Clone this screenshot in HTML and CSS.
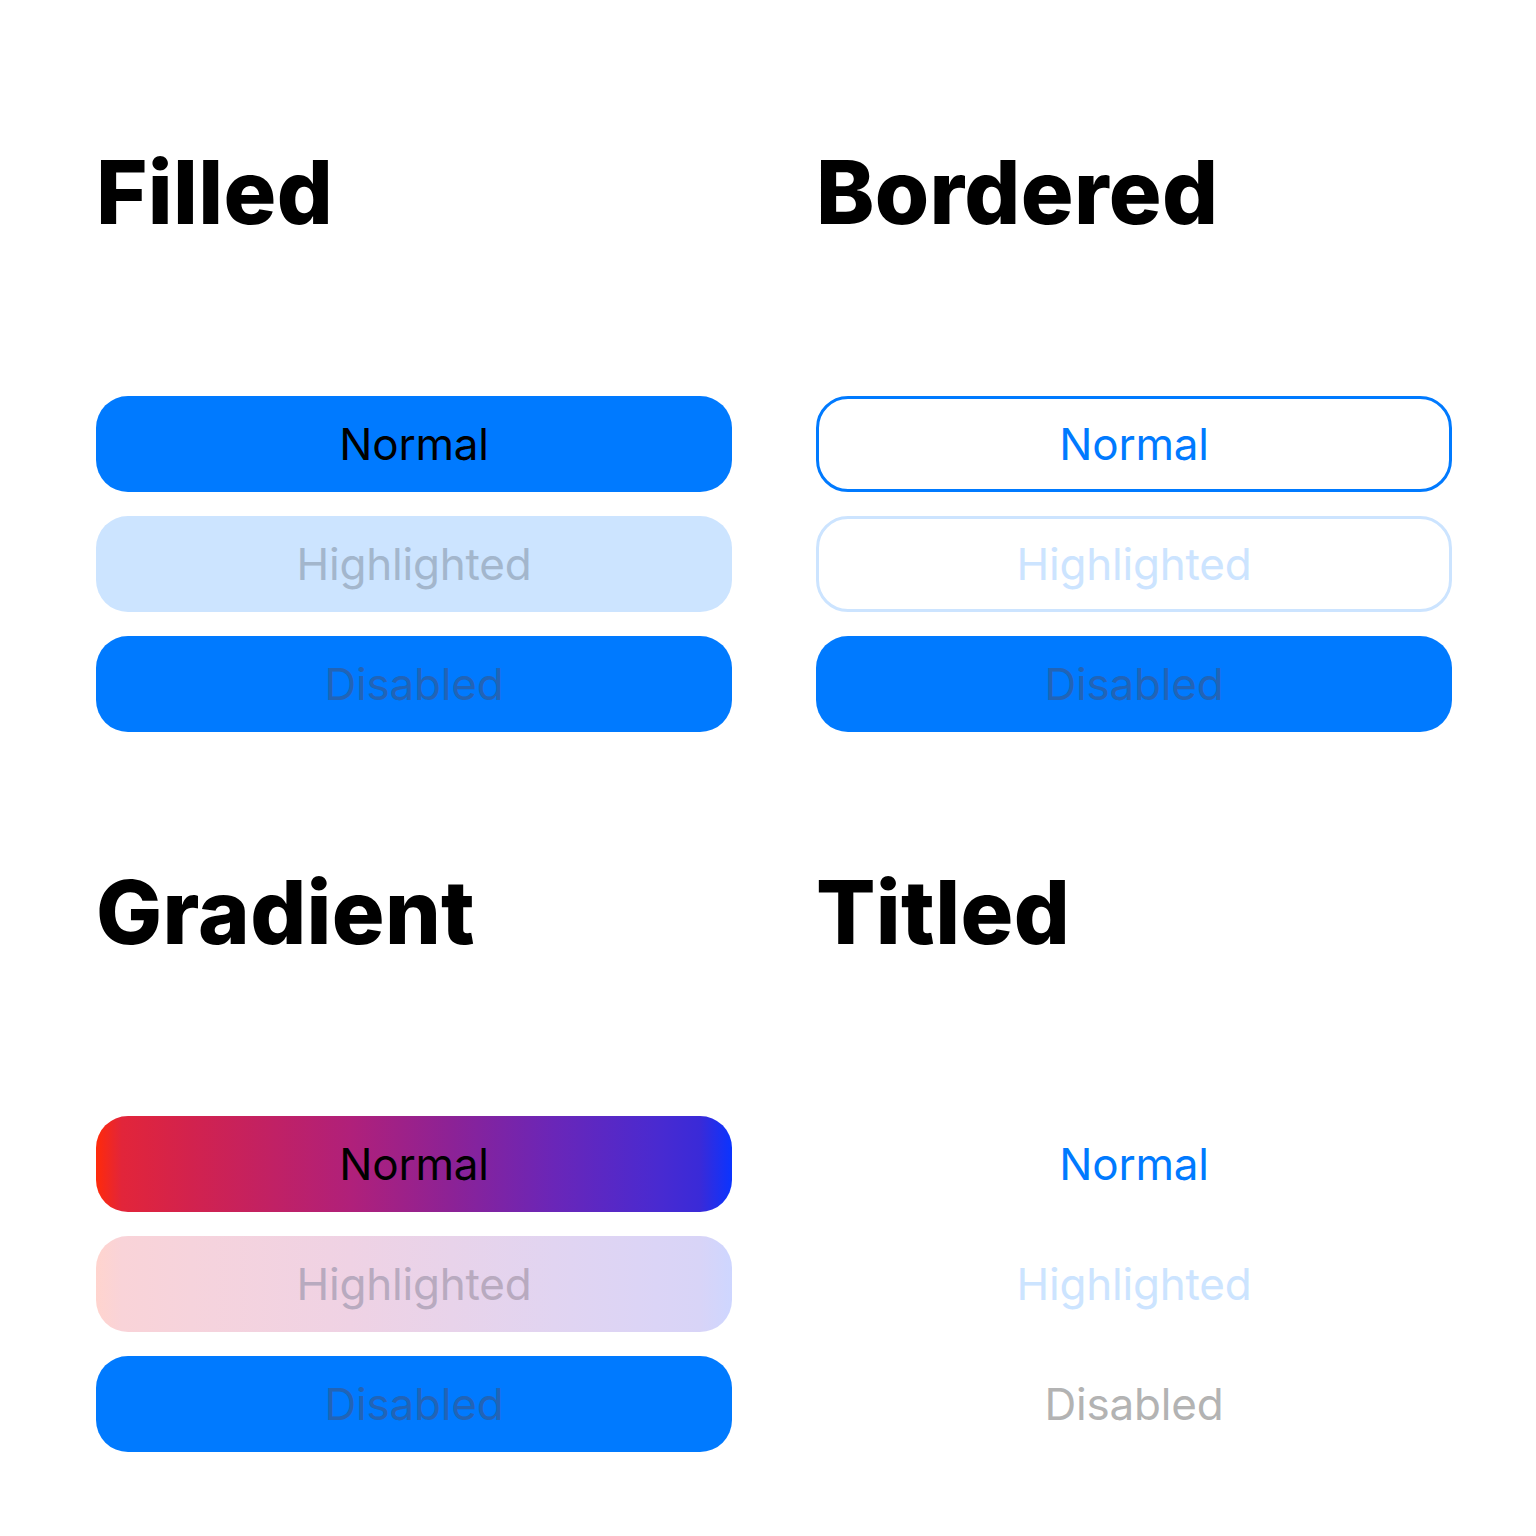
FILE: index.html
```html
<!DOCTYPE html>
<html lang="en">
<head>
<meta charset="utf-8">
<title>Button Styles</title>
<link rel="stylesheet" href="styles.css">
</head>
<body>
<main class="page">
  <section class="group">
    <h1 class="title">Filled</h1>
    <div class="buttons">
      <div class="btn filled normal">Normal</div>
      <div class="btn filled highlighted">Highlighted</div>
      <div class="btn filled disabled">Disabled</div>
    </div>
  </section>
  <section class="group">
    <h1 class="title">Bordered</h1>
    <div class="buttons">
      <div class="btn bordered normal">Normal</div>
      <div class="btn bordered highlighted">Highlighted</div>
      <div class="btn bordered disabled">Disabled</div>
    </div>
  </section>
  <section class="group">
    <h1 class="title">Gradient</h1>
    <div class="buttons">
      <div class="btn gradient normal">Normal</div>
      <div class="btn gradient highlighted">Highlighted</div>
      <div class="btn gradient disabled">Disabled</div>
    </div>
  </section>
  <section class="group">
    <h1 class="title">Titled</h1>
    <div class="buttons">
      <div class="btn titled normal">Normal</div>
      <div class="btn titled highlighted">Highlighted</div>
      <div class="btn titled disabled">Disabled</div>
    </div>
  </section>
</main>
</body>
</html>
```

FILE: styles.css
```css
html, body {
  margin: 0;
  padding: 0;
  background: #ffffff;
}

body {
  font-family: Inter, "Noto Sans", "Liberation Sans", sans-serif;
  color: #000;
}

.page {
  display: grid;
  grid-template-columns: 636px 636px;
  column-gap: 84px;
  row-gap: 136px;
  padding: 148px 0 0 96px;
}

.group {
  display: flex;
  flex-direction: column;
}

.title {
  margin: 0 0 160px 0;
  font-size: 88px;
  line-height: 88px;
  font-weight: 800;
  letter-spacing: 0.3px;
}

.buttons {
  display: flex;
  flex-direction: column;
  gap: 24px;
}

.btn {
  height: 96px;
  box-sizing: border-box;
  border-radius: 32px;
  display: flex;
  align-items: center;
  justify-content: center;
  font-size: 44px;
  line-height: 1;
  font-weight: 400;
  letter-spacing: -0.2px;
}

/* Filled */
.filled.normal { background: #007aff; color: #000; }
.filled.highlighted { background: #cce4ff; color: #a3b6cc; }
.filled.disabled { background: #007aff; color: #2264b6; }

/* Bordered */
.bordered.normal { border: 3px solid #007aff; color: #007aff; background: #fff; }
.bordered.highlighted { border: 3px solid #cce4ff; color: #cce4ff; background: #fff; }
.bordered.disabled { background: #007aff; color: #2264b6; }

/* Gradient */
.gradient.normal {
  background: linear-gradient(90deg, #ff2a0a 0%, #e2253a 4%, #d2224e 15%, #b0207a 40%, #8c2296 56%, #6a26b8 72%, #4a2ad0 88%, #3a2ad8 95%, #0a34ff 100%);
  color: #000;
}
.gradient.highlighted {
  background: linear-gradient(90deg, #ffd4ce 0%, #f9d3d8 4%, #f6d3dc 15%, #efd2e4 40%, #e8d3ea 56%, #e1d4f1 72%, #dbd4f6 88%, #d8d4f7 95%, #ced6ff 100%);
  color: #b8aabf;
}
.gradient.disabled { background: #007aff; color: #2264b6; }

/* Titled */
.titled { background: transparent; }
.titled.normal { color: #007aff; }
.titled.highlighted { color: #cce4ff; }
.titled.disabled { color: #b3b3b3; }
```
